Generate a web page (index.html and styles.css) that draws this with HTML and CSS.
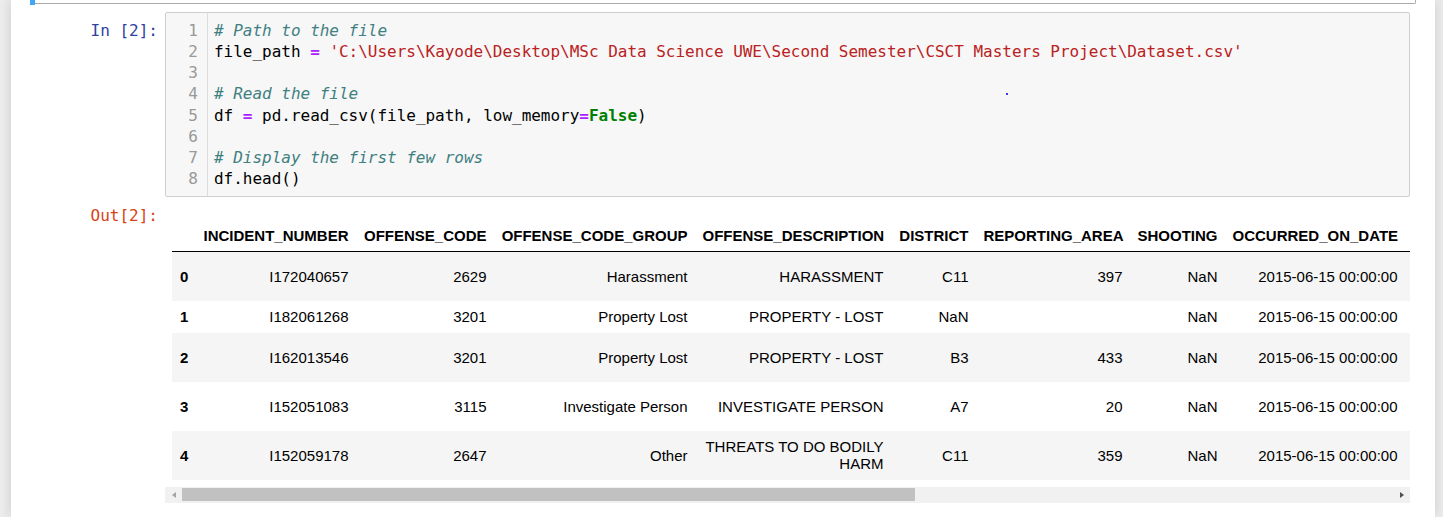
FILE: index.html
```html
<!DOCTYPE html>
<html lang="en">
<head>
<meta charset="utf-8">
<title>Notebook</title>
<link rel="stylesheet" href="styles.css">
</head>
<body>
<div class="notebook">
  <div class="prev-cell"></div>
  <div class="code-cell">
    <div class="input">
      <div class="prompt in-prompt">In [2]:</div>
      <div class="input-area">
        <div class="gutter">
          <div>1</div><div>2</div><div>3</div><div>4</div><div>5</div><div>6</div><div>7</div><div>8</div>
        </div>
<pre class="code"><span class="cm"># Path to the file</span>
file_path <span class="op">=</span> <span class="str">'C:\Users\Kayode\Desktop\MSc Data Science UWE\Second Semester\CSCT Masters Project\Dataset.csv'</span>

<span class="cm"># Read the file</span>
df <span class="op">=</span> pd.read_csv(file_path, low_memory<span class="op">=</span><span class="kw">False</span>)

<span class="cm"># Display the first few rows</span>
df.head()</pre>
        <span class="cursor-dot"></span>
      </div>
    </div>
    <div class="output">
      <div class="prompt out-prompt">Out[2]:</div>
      <div class="output-subarea">
        <div class="df-scroll">
          <table class="dataframe">
            <colgroup>
              <col class="c-idx"><col class="c-inc"><col class="c-oc"><col class="c-ocg"><col class="c-od"><col class="c-dist"><col class="c-ra"><col class="c-sh"><col class="c-date"><col class="c-more">
            </colgroup>
            <thead>
              <tr>
                <th></th>
                <th>INCIDENT_NUMBER</th>
                <th>OFFENSE_CODE</th>
                <th>OFFENSE_CODE_GROUP</th>
                <th>OFFENSE_DESCRIPTION</th>
                <th>DISTRICT</th>
                <th>REPORTING_AREA</th>
                <th>SHOOTING</th>
                <th>OCCURRED_ON_DATE</th>
                <th></th>
              </tr>
            </thead>
            <tbody>
              <tr class="tall">
                <th>0</th><td>I172040657</td><td>2629</td><td>Harassment</td><td>HARASSMENT</td><td>C11</td><td>397</td><td>NaN</td><td>2015-06-15 00:00:00</td><td></td>
              </tr>
              <tr class="short">
                <th>1</th><td>I182061268</td><td>3201</td><td>Property Lost</td><td>PROPERTY - LOST</td><td>NaN</td><td></td><td>NaN</td><td>2015-06-15 00:00:00</td><td></td>
              </tr>
              <tr class="tall">
                <th>2</th><td>I162013546</td><td>3201</td><td>Property Lost</td><td>PROPERTY - LOST</td><td>B3</td><td>433</td><td>NaN</td><td>2015-06-15 00:00:00</td><td></td>
              </tr>
              <tr class="tall">
                <th>3</th><td>I152051083</td><td>3115</td><td>Investigate Person</td><td>INVESTIGATE PERSON</td><td>A7</td><td>20</td><td>NaN</td><td>2015-06-15 00:00:00</td><td></td>
              </tr>
              <tr class="tall">
                <th>4</th><td>I152059178</td><td>2647</td><td>Other</td><td>THREATS TO DO BODILY<br>HARM</td><td>C11</td><td>359</td><td>NaN</td><td>2015-06-15 00:00:00</td><td></td>
              </tr>
            </tbody>
          </table>
        </div>
        <div class="hscroll">
          <div class="sb-btn"><span class="arrow-left"></span></div>
          <div class="sb-thumb"></div>
          <div class="sb-btn sb-right"><span class="arrow-right"></span></div>
        </div>
      </div>
    </div>
  </div>
</div>
</body>
</html>
```
FILE: styles.css
```css
* { box-sizing: border-box; }
html, body { margin: 0; height: 100%; }
body { background: #eeeeee; overflow: hidden; }

.notebook {
  margin-left: 11px;
  width: 1424px;
  min-height: 517px;
  background: #ffffff;
  box-shadow: 0 0 12px 1px rgba(87, 87, 87, 0.2);
  padding: 0 19px;
}

.prev-cell {
  position: relative;
  height: 4px;
  border: 1px solid #ababab;
  border-top: none;
  border-radius: 0 0 2px 2px;
}
.prev-cell::before {
  content: "";
  position: absolute;
  left: -1px;
  top: 0;
  width: 5px;
  height: 5px;
  background: #42a5f5;
}

.code-cell {
  border: 1px solid transparent;
  padding: 7px 5px 5px 5px;
}

.input, .output { display: flex; }

.prompt {
  width: 129px;
  flex: none;
  text-align: right;
  padding-right: 7px;
  font: 16px/21.15px "DejaVu Sans Mono", monospace;
  white-space: pre;
}
.in-prompt { color: #303f9f; padding-top: 8px; }
.out-prompt { color: #d84315; padding-top: 8px; }

.input-area {
  flex: 1;
  min-width: 0;
  position: relative;
  display: flex;
  border: 1px solid #cfcfcf;
  border-radius: 2px;
  background: #f7f7f7;
}
.gutter {
  width: 42px;
  flex: none;
  border-right: 1px solid #dddddd;
  padding: 7px 9px 7px 0;
  text-align: right;
  color: #999999;
  font: 16px/21.15px "DejaVu Sans Mono", monospace;
}
.code {
  margin: 0;
  padding: 7px 0 7px 6px;
  font: 16px/21.15px "DejaVu Sans Mono", monospace;
  letter-spacing: -0.02px;
  color: #000000;
}
.cm { color: #408080; font-style: italic; }
.str { color: #ba2121; }
.op { color: #aa22ff; font-weight: bold; }
.kw { color: #008000; font-weight: bold; }

.cursor-dot {
  position: absolute;
  left: 840px;
  top: 80px;
  width: 2px;
  height: 2px;
  background: #3a3ae0;
}

.output-subarea {
  flex: 1;
  min-width: 0;
  padding-top: 22px;
}
.df-scroll {
  overflow: hidden;
  padding-left: 7px;
  padding-bottom: 7px;
}

.dataframe {
  border-collapse: collapse;
  border-spacing: 0;
  table-layout: fixed;
  width: 1353px;
  font-family: "Liberation Sans", Arial, sans-serif;
  font-size: 15px;
  line-height: 17px;
  color: #000000;
}
.c-idx { width: 24px; }
.c-inc { width: 160px; }
.c-oc { width: 138px; }
.c-ocg { width: 201px; }
.c-od { width: 196px; }
.c-dist { width: 85px; }
.c-ra { width: 154px; }
.c-sh { width: 95px; }
.c-date { width: 180px; }
.c-more { width: 120px; }

.dataframe th, .dataframe td {
  padding: 7.5px;
  text-align: right;
  vertical-align: middle;
  white-space: nowrap;
  font-weight: normal;
}
.dataframe thead th {
  font-weight: bold;
  border-bottom: 1px solid #000000;
}
.dataframe tbody th {
  font-weight: bold;
  text-align: left;
  padding-left: 8px;
}
.dataframe tbody tr:nth-child(odd) { background: #f5f5f5; }
.dataframe tr.tall { height: 49px; }
.dataframe tr.short { height: 32px; }

.hscroll {
  display: flex;
  align-items: center;
  height: 16px;
  background: #f1f1f1;
}
.sb-btn {
  width: 17px;
  height: 16px;
  flex: none;
  display: flex;
  align-items: center;
  justify-content: center;
}
.sb-right { margin-left: auto; }
.sb-thumb {
  width: 733px;
  height: 13px;
  background: #c1c1c1;
  flex: none;
}
.arrow-left {
  width: 0;
  height: 0;
  border-top: 3.5px solid transparent;
  border-bottom: 3.5px solid transparent;
  border-right: 4px solid #a3a3a3;
}
.arrow-right {
  width: 0;
  height: 0;
  border-top: 3.5px solid transparent;
  border-bottom: 3.5px solid transparent;
  border-left: 4px solid #505050;
}
```
